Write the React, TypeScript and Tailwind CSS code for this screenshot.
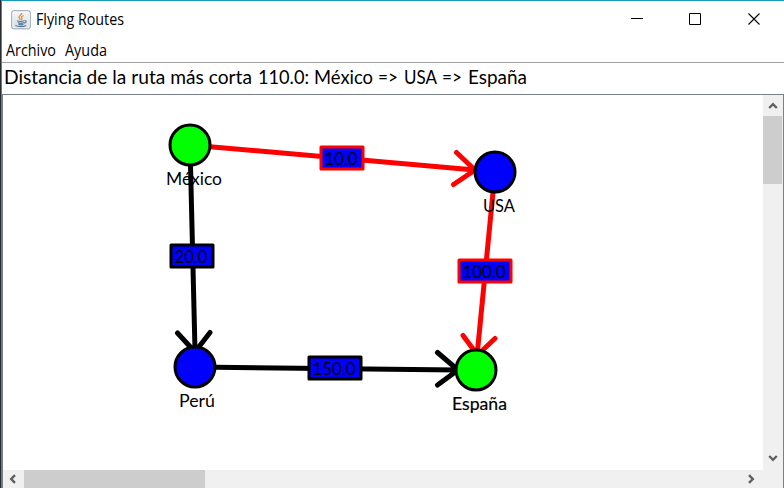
import React from "react";

type City = { name: string; x: number; y: number; fill: string; tx: number; ty: number; width: number; strong?: boolean };
const cities: City[] = [
  { name: "México", x: 187, y: 50, fill: "#00ff00", tx: 163, ty: 90, width: 56 },
  { name: "USA", x: 492, y: 77, fill: "#0000ff", tx: 480, ty: 117, width: 32 },
  { name: "Perú", x: 192, y: 272, fill: "#0000ff", tx: 176, ty: 312, width: 36 },
  { name: "España", x: 473, y: 275, fill: "#00ff00", tx: 449, ty: 315, width: 55, strong: true },
];

type Route = { d: string; color: string; label: string; x: number; y: number; w: number };
const routes: Route[] = [
  { d: "M187 50L472 75M453.5 57.5L472 75L450.5 89.5", color: "#ff0000", label: "10.0", x: 318, y: 52, w: 42 },
  { d: "M187 50L192 255M174.5 238L192 257L207 237.5", color: "#000000", label: "20.0", x: 168, y: 150, w: 42 },
  { d: "M492 77L474.5 256M460 240.5L474.5 260L492 243.5", color: "#ff0000", label: "100.0", x: 456, y: 165, w: 52 },
  { d: "M192 272L455 275M434.5 257.5L455 275L434.5 290", color: "#000000", label: "150.0", x: 306, y: 262, w: 52 },
];

const message = [
  { text: "Distancia de la ruta más corta", x: 2, width: 248 },
  { text: "110.0:", x: 256, width: 51 },
  { text: "México", x: 312, width: 59 },
  { text: "=>", x: 376, width: 20 },
  { text: "USA", x: 402, width: 33 },
  { text: "=>", x: 440, width: 20 },
  { text: "España", x: 466, width: 59 },
];

function JavaIcon() {
  return (
    <svg className="block size-5 shrink-0" viewBox="0 0 20 20" fill="none">
      <defs>
        <linearGradient id="tile" x1="0" y1="0" x2="0" y2="1">
          <stop stopColor="#f5f6f7" />
          <stop offset="1" stopColor="#d4dbe2" />
        </linearGradient>
      </defs>
      <rect x=".8" y=".8" width="18.4" height="18" rx="1.8" fill="url(#tile)" stroke="#8795a4" />
      <rect x="1.8" y="1.8" width="16.4" height="16" rx="1" stroke="#fff" opacity=".7" />
      <path d="M10.8 3C11 5 7.5 5.6 8.1 7.5C8.3 8.3 9.2 8.8 9.2 9.8M12.7 5.5C10.7 6.2 10.1 7 10.8 7.9C11.3 8.6 10.8 9.2 10.3 9.8" stroke="#e78932" strokeWidth="1.3" />
      <path d="M6 10.8C8 11.4 11.5 11.3 13.3 10.7M6.8 12.5C8.5 13.4 11.5 13.3 12.8 12.5M13.6 10.8C16.2 10.2 15.5 12.8 13 13.1M7.4 14.3C9 15 11 14.9 12.4 14.3M4.4 15.4C6.5 17 12.8 17 15 15.5" stroke="#557b9c" strokeWidth="1.15" />
    </svg>
  );
}

function Chevron({ direction }: { direction: "up" | "down" | "left" | "right" }) {
  const path = {
    up: "M1.2 7L5 3.2L8.8 7",
    down: "M1.2 3L5 6.8L8.8 3",
    left: "M7 1.2L3.2 5L7 8.8",
    right: "M3 1.2L6.8 5L3 8.8",
  }[direction];
  return <svg className="block size-[10px]" viewBox="0 0 10 10"><path d={path} fill="none" stroke="#606060" strokeWidth="2.4" /></svg>;
}

function RouteGraph() {
  return (
    <svg className="block h-[375px] w-[760px] font-['Lato','Liberation_Sans',sans-serif]" viewBox="0 0 760 375">
      {routes.map(r => (
        <path key={r.label} d={r.d} fill="none" stroke={r.color} strokeWidth="5" strokeLinecap="round" strokeLinejoin="round" />
      ))}
      {routes.map(r => (
        <g key={r.label}>
          <rect x={r.x} y={r.y} width={r.w} height="22" fill="#0000ff" stroke={r.color} strokeWidth="3" strokeLinejoin="round" />
          <text x={r.x + 3.5} y={r.y + 18} fontSize="17" textLength={r.w - 9} lengthAdjust="spacingAndGlyphs">{r.label}</text>
        </g>
      ))}
      {cities.map(c => (
        <g key={c.name}>
          <circle cx={c.x} cy={c.y} r="20" fill={c.fill} stroke="#000" strokeWidth="3" />
          <text x={c.tx} y={c.ty} fontSize="17" textLength={c.width} lengthAdjust="spacingAndGlyphs" stroke="#000" strokeWidth={c.strong ? 0.2 : 0}>{c.name}</text>
        </g>
      ))}
    </svg>
  );
}

export default function App() {
  return (
    <div className="flex h-[488px] w-[784px] overflow-hidden border-l border-[#292d31] bg-white font-['Open_Sans','Noto_Sans',sans-serif] text-black">
      <div className="flex min-w-0 flex-1 flex-col border-l border-t border-[#169bb9]">
        <header className="flex h-[37px] shrink-0 items-center pl-[9px]">
          <JavaIcon />
          <svg className="ml-[5px] block h-6 w-[100px]" viewBox="0 0 100 24"><text x="0" y="17" fontSize="15.5" textLength="88" lengthAdjust="spacingAndGlyphs">Flying Routes</text></svg>
          <div className="ml-auto flex w-[153px] items-center gap-[45px]">
            <svg className="size-[13px]" viewBox="0 0 13 13"><path d="M0 5.5H12" stroke="#000" /></svg>
            <svg className="size-[13px]" viewBox="0 0 13 13"><path d="M.5.5H11.5V11.5H.5Z" fill="none" stroke="#000" /></svg>
            <svg className="ml-px size-[13px]" viewBox="0 0 13 13"><path d="M.5.5L11.5 11.5M11.5 .5L.5 11.5" stroke="#000" strokeWidth="1.1" /></svg>
          </div>
        </header>
        <nav className="h-[25px] shrink-0 border-b border-[#a0a0a0]">
          <svg className="block h-6 w-[140px]" viewBox="0 0 140 24" fontSize="15.5">
            <text x="4" y="18" textLength="50" lengthAdjust="spacingAndGlyphs">Archivo</text>
            <text x="63" y="18" textLength="42" lengthAdjust="spacingAndGlyphs">Ayuda</text>
          </svg>
        </nav>
        <div className="h-8 shrink-0 border-b border-[#7a8087]">
          <svg className="block h-[31px] w-[540px] font-['Lato','Liberation_Sans',sans-serif]" viewBox="0 0 540 31">
            {message.map(part => (
              <text key={part.x} x={part.x} y="21" fontSize="18.5" textLength={part.width} lengthAdjust="spacingAndGlyphs">{part.text}</text>
            ))}
          </svg>
        </div>
        <main className="flex min-h-0 flex-1 flex-col border-l border-r border-[#7a8087]">
          <div className="flex h-[375px] shrink-0">
            <RouteGraph />
            <div className="flex w-5 shrink-0 flex-col bg-[#f0f0f0]">
              <div className="flex h-[21px] w-[19px] items-center justify-center"><Chevron direction="up" /></div>
              <div className="h-[68px] w-[19px] bg-[#cdcdcd]" />
              <div className="mt-auto flex h-6 w-[19px] items-center justify-center"><Chevron direction="down" /></div>
            </div>
          </div>
          <div className="flex h-[18px] shrink-0 bg-[#f0f0f0]">
            <div className="flex w-[21px] items-center justify-center pr-[2px]"><Chevron direction="left" /></div>
            <div className="w-[181px] bg-[#cdcdcd]" />
            <div className="ml-auto mr-[20px] flex w-6 items-center justify-center"><Chevron direction="right" /></div>
          </div>
        </main>
      </div>
    </div>
  );
}
